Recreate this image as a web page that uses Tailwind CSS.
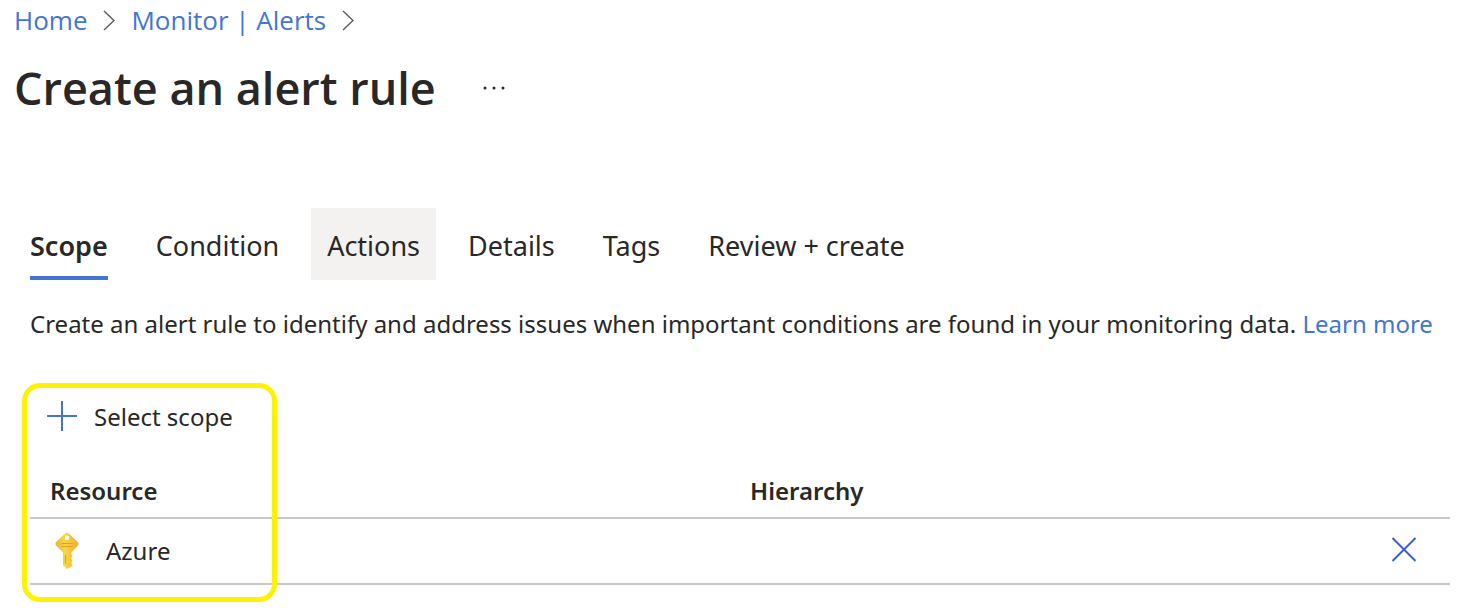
<!DOCTYPE html>
<html lang="en">
<head>
<meta charset="utf-8">
<meta name="viewport" content="width=device-width, initial-scale=1">
<title>Create an alert rule</title>
<script src="https://cdn.jsdelivr.net/npm/@tailwindcss/browser@4"></script>
</head>
<body class="min-h-screen bg-white font-['Segoe_UI','Noto_Sans','Open_Sans',sans-serif] text-2xl leading-8 text-[#292827]">
<header class="px-[14px] pt-1">
  <nav aria-label="Breadcrumb" class="flex items-center gap-4 text-[26px] text-[#4375d2] font-['Segoe_UI','Open_Sans',sans-serif]">
    <a href="#home">Home</a>
    <svg class="h-6 w-3" viewBox="0 0 12 24" fill="none" stroke="#605e5c" stroke-width="1.5" aria-hidden="true"><path d="M1 3l10 9.500-10 9.500"/></svg>
    <a href="#alerts">Monitor | Alerts</a>
    <svg class="h-6 w-3" viewBox="0 0 12 24" fill="none" stroke="#605e5c" stroke-width="1.500" aria-hidden="true"><path d="M1 3l10 9.500-10 9.500"/></svg>
  </nav>
  <div class="mt-[22px] flex items-center gap-11 pb-1">
    <h1 class="text-[45px] font-semibold leading-[60px] font-['Segoe_UI','Open_Sans',sans-serif]">Create an alert rule</h1>
    <button type="button" aria-label="More options" class="flex h-8 w-8 items-center">
      <svg class="h-2 w-7" viewBox="0 0 28 8" fill="#292827" aria-hidden="true"><circle cx="5" cy="4" r="1.500"/><circle cx="14" cy="4" r="1.500"/><circle cx="23" cy="4" r="1.500"/></svg>
    </button>
  </div>
</header>
<main class="pb-7 pl-[30px] pr-7 pt-[86px]">
  <div role="tablist" class="-mx-4 flex gap-4 text-[27px]">
    <button type="button" role="tab" aria-selected="true" class="px-4 font-semibold"><span class="block border-b-4 border-[#4375d2] pt-[22px] pb-[14px]">Scope</span></button>
    <button type="button" role="tab" aria-selected="false" class="px-4 pt-[22px] pb-[18px]">Condition</button>
    <button type="button" role="tab" aria-selected="false" class="bg-[#f3f2f1] px-4 pt-[22px] pb-[18px]">Actions</button>
    <button type="button" role="tab" aria-selected="false" class="px-4 pt-[22px] pb-[18px]">Details</button>
    <button type="button" role="tab" aria-selected="false" class="px-4 pt-[22px] pb-[18px]">Tags</button>
    <button type="button" role="tab" aria-selected="false" class="px-4 pt-[22px] pb-[18px]">Review + create</button>
  </div>
  <p class="mt-7 whitespace-nowrap">Create an alert rule to identify and address issues when important conditions are found in your monitoring data. <a href="#learn" class="text-[#4375d2]">Learn more</a></p>
  <section class="relative mt-[61px]">
    <button type="button" class="ml-4 flex items-center gap-4">
      <svg class="h-8 w-8" viewBox="0 0 32 32" stroke="#4375d2" stroke-width="2" aria-hidden="true"><path d="M16 0v30M1 15h30"/></svg>
      Select scope
    </button>
    <table class="mt-[33px] w-full table-fixed border-collapse text-left">
      <thead>
        <tr class="h-[52px] border-b-2 border-[#c8c8c8] align-middle">
          <th scope="col" class="pl-5 pb-0.5 font-semibold">Resource</th>
          <th scope="col" class="w-[50.700%] pl-5 pb-0.5 font-semibold" colspan="2">Hierarchy</th>
        </tr>
      </thead>
      <tbody>
        <tr class="h-[66px] border-b-2 border-[#c8c8c8] align-middle">
          <td class="pl-5"><div class="flex items-center gap-6">
            <svg class="h-10 w-8" viewBox="0 0 32 40" aria-hidden="true">
              <defs><linearGradient id="key" x1="0" x2="1" y1="0" y2="0"><stop offset="0" stop-color="#eab03a"/><stop offset=".4" stop-color="#f8d842"/><stop offset="1" stop-color="#eaae36"/></linearGradient></defs>
              <path fill="url(#key)" fill-rule="evenodd" d="M15 2.500q2-1.700 4 0l8.500 8.300q2.200 2 0 4.300L21.500 21.500v2l1 1.500-1 1.500v1.500l1 1.500-1 1.500v1.500l1 1.500-1 1.500L17 38 13 34V21.500L6.500 15q-2.200-2.200 0-4.300ZM17 4.500a2.300 2.300 0 1 0 0 4.600 2.300 2.300 0 0 0 0-4.600Z"/>
              <path stroke="#e89c2c" stroke-width="1.200" d="M11.500 12.500h11.500M11.500 15.500h11.500M15.500 24v8.500" fill="none"/>
            </svg>
            Azure</div></td>
          <td></td>
          <td><button type="button" aria-label="Remove Azure" class="ml-auto mr-8 block h-7 w-7"><svg class="h-7 w-7" viewBox="0 0 28 28" stroke="#3b5fd0" stroke-width="2" aria-hidden="true"><path d="M2.500 1l23 23M25.500 1L2.500 24"/></svg></button></td>
        </tr>
      </tbody>
    </table>
    <div class="pointer-events-none absolute -top-[18px] -left-2 h-[219px] w-[255px] rounded-[18px] border-[5px] border-[#fff200]"></div>
  </section>
</main>
</body>
</html>
